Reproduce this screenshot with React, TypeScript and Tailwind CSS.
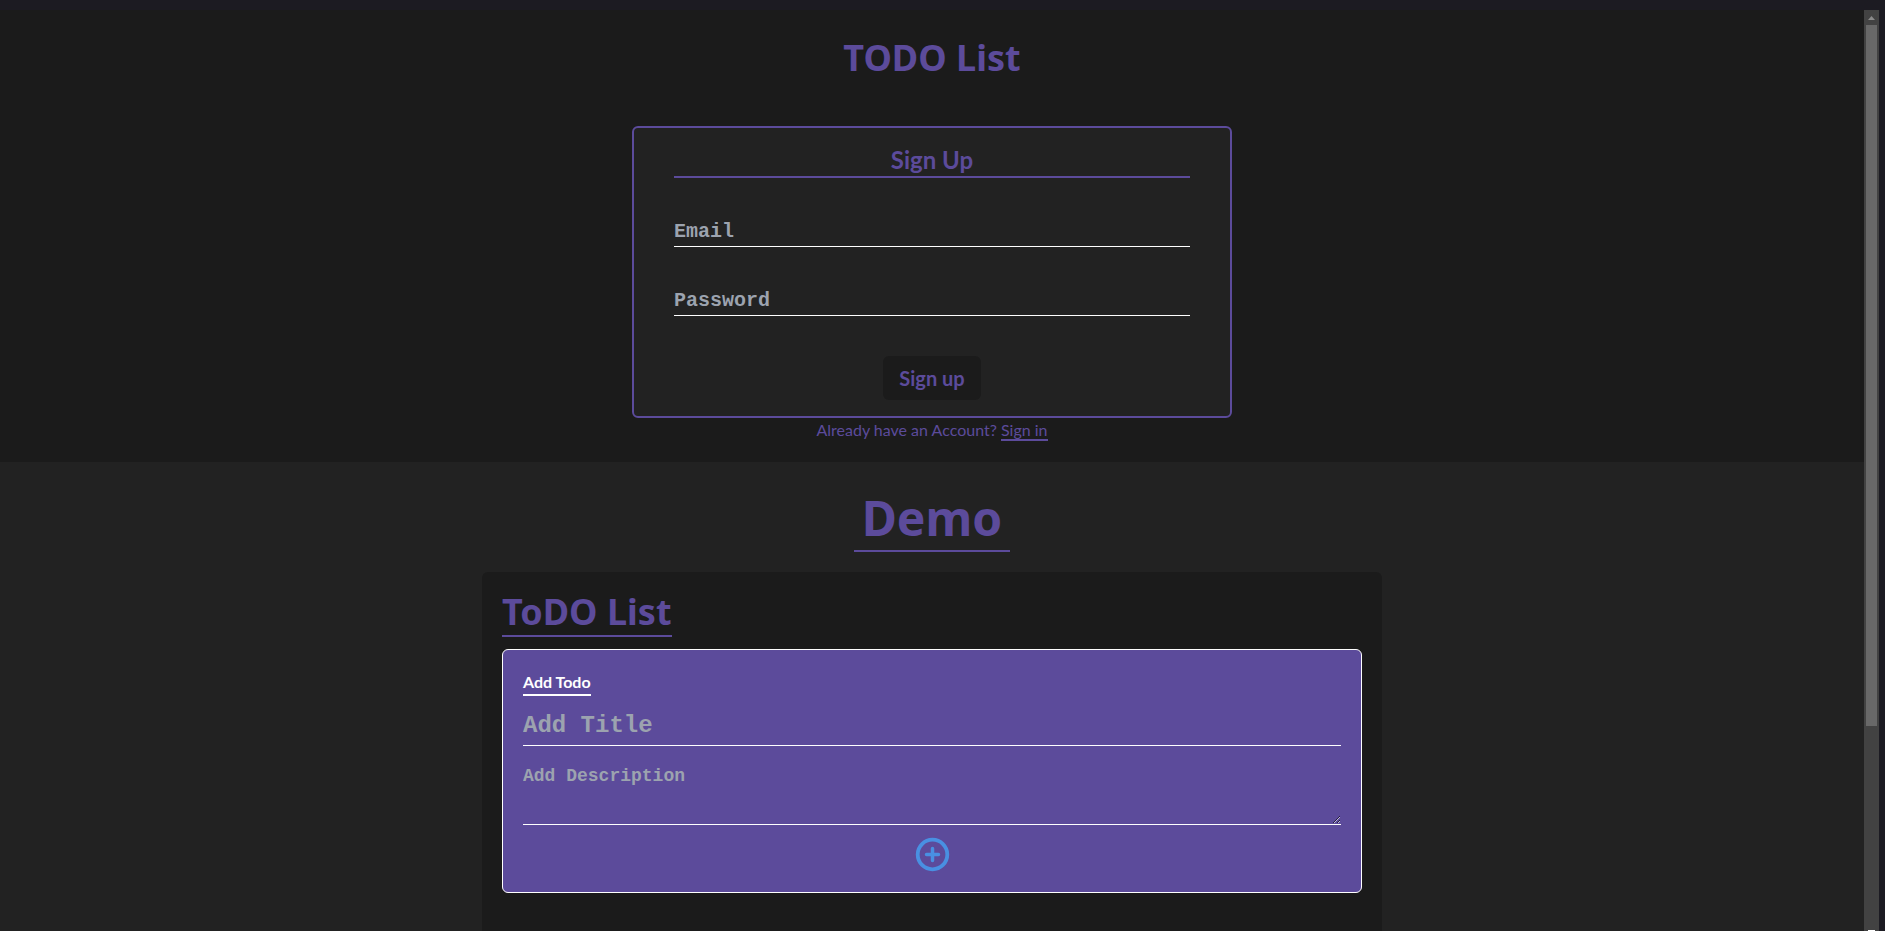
function SignUp() {
  return (
    <section className="bg-[#1b1b1b] px-5 pb-5">
      <h1 className="pt-7 text-center font-['Noto_Sans',sans-serif] text-4xl font-bold">TODO List</h1>
      <form className="mx-auto mt-12 flex w-full max-w-[600px] flex-col items-center gap-10 rounded-md border-2 border-[#5c4b9b] bg-[#222222] px-10 py-4">
        <h2 className="w-full border-b-2 border-[#5c4b9b] text-center text-2xl font-bold">Sign Up</h2>
        <input
          type="email"
          aria-label="Email"
          placeholder="Email"
          className="w-full border-b border-white bg-transparent font-['Liberation_Mono',monospace] text-xl font-bold text-white outline-none placeholder:text-[#9ca3af]"
        />
        <input
          type="password"
          aria-label="Password"
          placeholder="Password"
          className="w-full border-b border-white bg-transparent font-['Liberation_Mono',monospace] text-xl font-bold text-white outline-none placeholder:text-[#9ca3af]"
        />
        <button type="button" className="rounded-md bg-[#1b1b1b] px-4 py-2 text-xl font-bold">
          Sign up
        </button>
      </form>
      <p className="text-center">
        Already have an Account?{" "}
        <a href="#signin" className="inline-block border-b-2 border-[#5c4b9b] leading-[18px]">
          Sign in
        </a>
      </p>
    </section>
  );
}

function AddIcon() {
  return (
    <svg viewBox="0 0 35 35" className="size-[35px]" fill="none" stroke="#4990e2" strokeWidth="3.5" strokeLinecap="round" aria-hidden="true">
      <circle cx="17.5" cy="17.5" r="14.8" strokeWidth="3.8" />
      <path d="M17.5 11.5v12M11.5 17.5h12" />
    </svg>
  );
}

function Demo() {
  return (
    <section className="flex flex-col items-center bg-[#222222] px-5 pt-8">
      <h2 className="border-b-2 border-[#5c4b9b] px-2 pb-2 font-['Noto_Sans',sans-serif] text-5xl font-bold">Demo</h2>
      <div className="mt-5 min-h-[480px] w-full max-w-[900px] rounded-md bg-[#1b1b1b] p-5">
        <h3 className="w-fit border-b-2 border-[#5c4b9b] pb-[3px] font-['Noto_Sans',sans-serif] text-4xl font-bold">ToDO List</h3>
        <form className="mt-3 flex flex-col rounded-md border border-white bg-[#5c4b9b] p-5">
          <h4 className="w-fit border-b-2 border-white font-bold text-white">Add Todo</h4>
          <input
            type="text"
            aria-label="Title"
            placeholder="Add Title"
            className="mt-[14px] w-full border-b border-white bg-transparent pb-[3px] font-['Liberation_Mono',monospace] text-2xl font-bold text-white outline-none placeholder:text-[#9ca3af]"
          />
          <textarea
            aria-label="Description"
            rows={2}
            placeholder="Add Description"
            className="mt-4 block h-[63px] w-full border-b border-white bg-transparent font-['Liberation_Mono',monospace] text-lg font-bold text-white outline-none placeholder:text-[#9ca3af]"
          />
          <button type="button" aria-label="Add todo" className="mt-3 self-center">
            <AddIcon />
          </button>
        </form>
      </div>
    </section>
  );
}

function ScrollTrack() {
  return (
    <div className="flex w-[15px] shrink-0 flex-col items-center bg-[#424242]" aria-hidden="true">
      <svg viewBox="0 0 15 15" className="h-[15px] w-[15px] shrink-0" fill="#8a8a8a">
        <path d="M4 10h7L7.5 6z" />
      </svg>
      <div className="h-[76.1%] w-[11px] bg-[#686868]" />
      <div className="mt-auto h-px w-[7px] bg-white" />
    </div>
  );
}

export default function App() {
  return (
    <div className="flex h-screen overflow-hidden bg-[#1c1b22] pt-[10px] pr-[6px] font-['Lato','Noto_Sans',sans-serif] text-[#5c4b9b]">
      <main className="min-w-0 flex-1 overflow-hidden">
        <SignUp />
        <Demo />
      </main>
      <ScrollTrack />
    </div>
  );
}
